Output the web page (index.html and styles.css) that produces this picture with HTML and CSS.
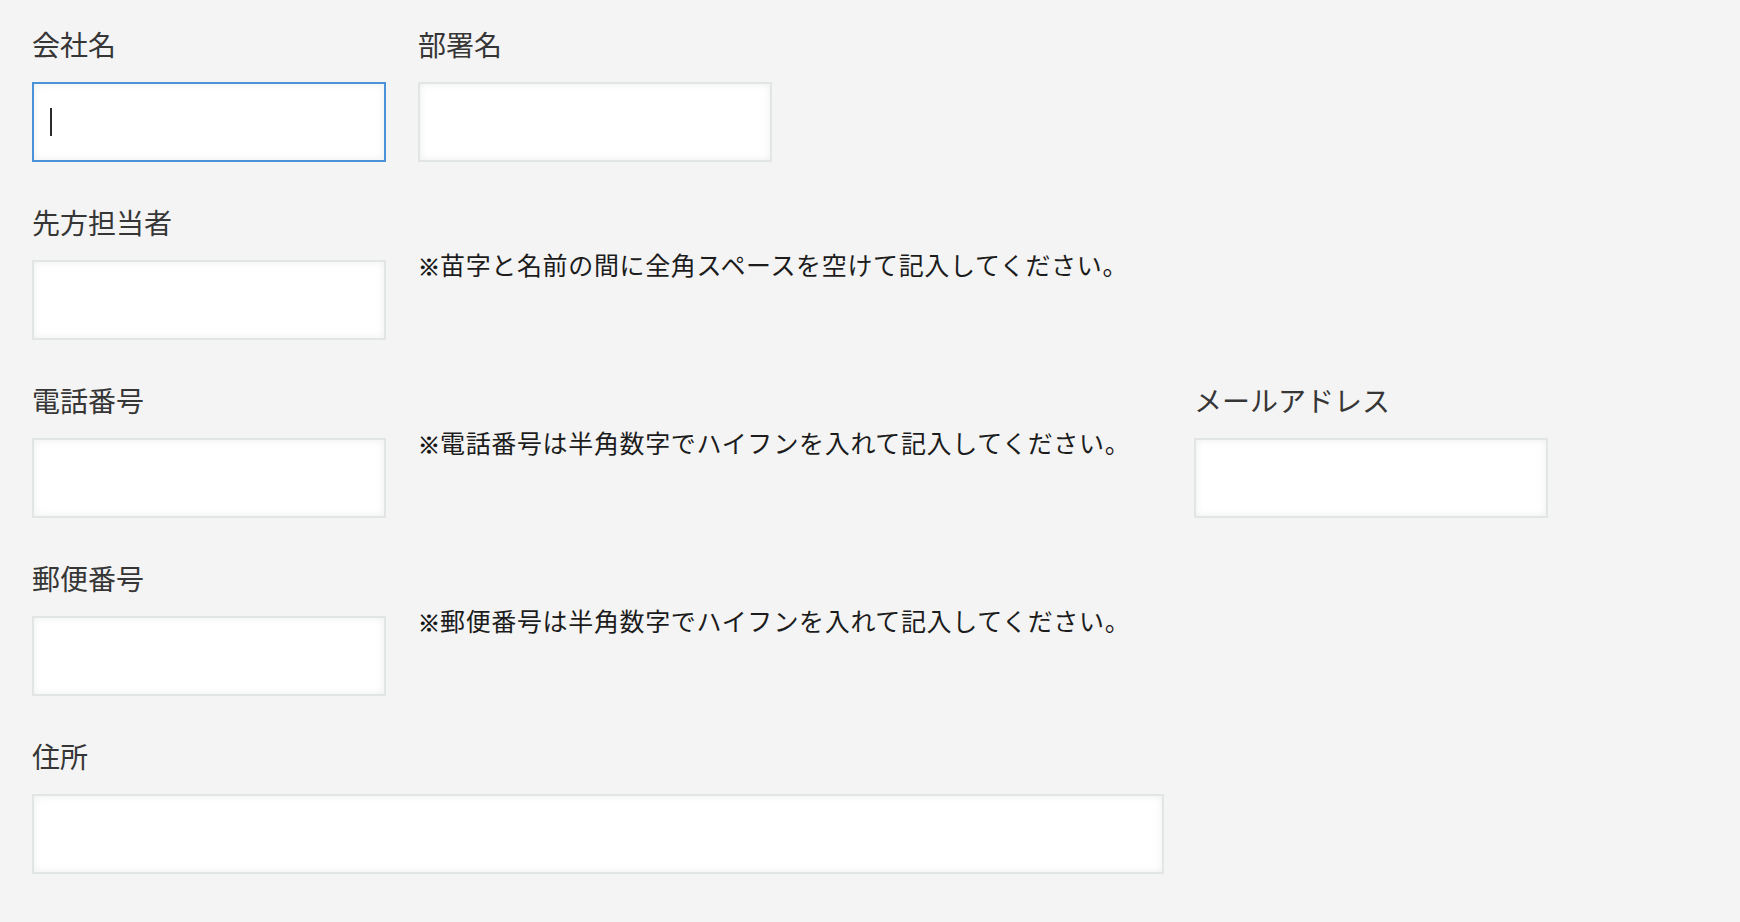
FILE: index.html
```html
<!DOCTYPE html>
<html lang="ja">
<head>
<meta charset="utf-8">
<title>お問い合わせフォーム</title>
<link rel="stylesheet" href="styles.css">
</head>
<body>
<form class="form">
  <div class="row">
    <div class="field">
      <label class="label" for="company">会社名</label>
      <div class="control">
        <input class="input is-focused" id="company" type="text">
        <span class="caret"></span>
      </div>
    </div>
    <div class="field">
      <label class="label" for="dept">部署名</label>
      <input class="input" id="dept" type="text">
    </div>
  </div>

  <div class="row">
    <div class="field">
      <label class="label" for="person">先方担当者</label>
      <input class="input" id="person" type="text">
    </div>
    <p class="note"><span class="mark">※</span>苗字と名前の間に全角スペースを空けて記入してください。</p>
  </div>

  <div class="row">
    <div class="field">
      <label class="label" for="tel">電話番号</label>
      <input class="input" id="tel" type="text">
    </div>
    <p class="note"><span class="mark">※</span>電話番号は半角数字でハイフンを入れて記入してください。</p>
    <div class="field">
      <label class="label" for="mail">メールアドレス</label>
      <input class="input" id="mail" type="text">
    </div>
  </div>

  <div class="row">
    <div class="field">
      <label class="label" for="zip">郵便番号</label>
      <input class="input" id="zip" type="text">
    </div>
    <p class="note"><span class="mark">※</span>郵便番号は半角数字でハイフンを入れて記入してください。</p>
  </div>

  <div class="row">
    <div class="field field--wide">
      <label class="label" for="addr">住所</label>
      <input class="input input--wide" id="addr" type="text">
    </div>
  </div>
</form>
</body>
</html>
```

FILE: styles.css
```css
* {
  box-sizing: border-box;
}

html, body {
  margin: 0;
  background: #f4f4f4;
}

body {
  font-family: "Noto Sans CJK JP", "Noto Sans", sans-serif;
  color: #333;
}

.form {
  display: flex;
  flex-direction: column;
  gap: 40px;
  padding: 24px 32px;
}

.row {
  display: flex;
  align-items: flex-start;
  gap: 32px;
}

.field {
  display: flex;
  flex-direction: column;
  width: 354px;
  flex: none;
}

.field--wide {
  width: 1132px;
}

.label {
  display: block;
  font-size: 28px;
  line-height: 40px;
  color: #363636;
  margin-bottom: 18px;
}

.control {
  position: relative;
}

.input {
  display: block;
  width: 354px;
  height: 80px;
  margin: 0;
  padding: 0 16px;
  border: 2px solid #e1e6e5;
  border-radius: 0;
  background: #fff;
  box-shadow: inset 0 0 9px rgba(0, 0, 0, 0.07);
  font-family: inherit;
  font-size: 28px;
  outline: none;
}

.input--wide {
  width: 1132px;
}

.input.is-focused {
  border-color: #4b92d8;
}

.caret {
  position: absolute;
  left: 18px;
  top: 26px;
  width: 2px;
  height: 28px;
  background: #2b2b2b;
}

.note {
  width: 744px;
  flex: none;
  margin: 44px 0 0;
  font-size: 25px;
  line-height: 36px;
  letter-spacing: 0.65px;
  color: #1c1c1c;
  white-space: nowrap;
}

.mark {
  font-size: 22px;
  font-weight: 700;
  letter-spacing: 0;
  color: #111;
  -webkit-text-stroke: 0.6px #111;
}
```
